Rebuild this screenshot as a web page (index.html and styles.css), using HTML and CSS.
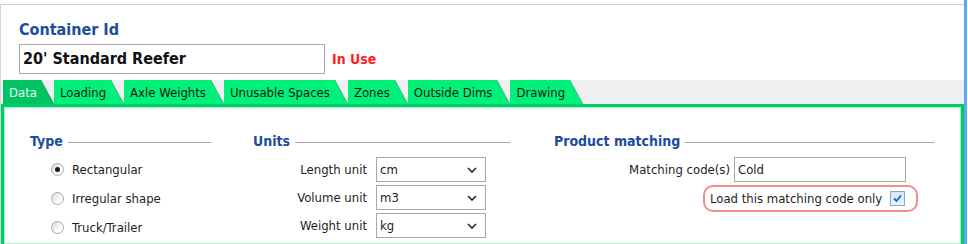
FILE: index.html
```html
<!DOCTYPE html>
<html lang="en">
<head>
  <meta charset="UTF-8" />
  <title>Container</title>
  <link rel="stylesheet" href="styles.css">
</head>
<body>

  <div class="window">
    <div class="frame">

      <!-- Container id -->
      <div class="header">
        <div class="id-label">Container Id</div>
        <div class="id-row">
          <div class="id-box">20' Standard Reefer</div>
          <span class="status">In Use</span>
        </div>
      </div>

      <!-- Tabs -->
      <div class="tabs">
        <div class="tab active">Data</div>
        <div class="tab">Loading</div>
        <div class="tab">Axle Weights</div>
        <div class="tab">Unusable Spaces</div>
        <div class="tab">Zones</div>
        <div class="tab">Outside Dims</div>
        <div class="tab">Drawing</div>
      </div>

      <!-- Data panel -->
      <div class="panel">

        <div class="group group-type">
          <div class="group-title">Type</div>
          <div class="radio-list">
            <div class="radio-row"><span class="radio checked"></span>Rectangular</div>
            <div class="radio-row"><span class="radio"></span>Irregular shape</div>
            <div class="radio-row"><span class="radio"></span>Truck/Trailer</div>
          </div>
        </div>

        <div class="group group-units">
          <div class="group-title">Units</div>
          <div class="field-list">
            <div class="field-row">
              <span class="field-label">Length unit</span>
              <div class="select">cm
                <svg class="chevron" width="10" height="6" viewBox="0 0 10 6"><polyline points="1,1 5,5 9,1" /></svg>
              </div>
            </div>
            <div class="field-row">
              <span class="field-label">Volume unit</span>
              <div class="select">m3
                <svg class="chevron" width="10" height="6" viewBox="0 0 10 6"><polyline points="1,1 5,5 9,1" /></svg>
              </div>
            </div>
            <div class="field-row">
              <span class="field-label">Weight unit</span>
              <div class="select">kg
                <svg class="chevron" width="10" height="6" viewBox="0 0 10 6"><polyline points="1,1 5,5 9,1" /></svg>
              </div>
            </div>
          </div>
        </div>

        <div class="group group-product">
          <div class="group-title">Product matching</div>
          <div class="field-list">
            <div class="field-row">
              <span class="field-label match-label">Matching code(s)</span>
              <div class="text-input">Cold</div>
            </div>
            <div class="highlight">
              Load this matching code only
              <span class="checkbox">
                <svg width="11" height="11" viewBox="0 0 11 11"><polyline points="2,5.5 4.5,8 9,2.5" /></svg>
              </span>
            </div>
          </div>
        </div>

      </div>
    </div>
  </div>

</body>
</html>
```

FILE: styles.css
```css
/* Global */
body {
  margin: 0;
  background-color: #fff;
  font-family: "DejaVu Sans Condensed", "DejaVu Sans", sans-serif;
  font-stretch: semi-condensed;
  font-size: 13px;
  color: #1e1e1e;
}

/* Window frame */
.window {
  width: 964px;
  height: 240px;
  padding-top: 4px;
  border-right: 3px solid #5aa8f8;
}

.frame {
  height: 239px;
  border-top: 1px solid #cdcdcd;
  border-left: 1px solid #d6d6d6;
  display: flex;
  flex-direction: column;
}

/* Header */
.header {
  height: 75px;
  box-sizing: border-box;
  padding: 15px 0 0 18px;
}

.id-label {
  font-size: 16px;
  font-weight: bold;
  color: #1c4c9c;
  line-height: 19px;
  margin-bottom: 5px;
}

.id-row {
  display: flex;
  align-items: center;
}

.id-box {
  width: 306px;
  height: 30px;
  box-sizing: border-box;
  border: 1px solid #a9a9a9;
  padding-left: 3px;
  font-size: 16px;
  font-weight: bold;
  color: #111;
  line-height: 28px;
}

.status {
  margin-left: 7px;
  font-size: 14px;
  font-weight: bold;
  color: #ff1f1f;
}

/* Tabs */
.tabs {
  height: 24px;
  background-color: #f0f0f0;
  display: flex;
  padding-left: 2px;
}

.tab {
  height: 24px;
  box-sizing: border-box;
  padding: 2px 18px 0 6px;
  line-height: 22px;
  color: #0c1a10;
  background:
    linear-gradient(to top right, #00f07a calc(50% - 0.6px), #5fae86 50%, transparent calc(50% + 0.6px)) right / 13px 100% no-repeat,
    linear-gradient(#00f07a, #00f07a) left / calc(100% - 13px) 100% no-repeat;
}

.tab.active {
  padding-right: 17px;
  color: #e6fff0;
  background:
    linear-gradient(to top right, #00c462 calc(50% - 0.6px), #4c9c74 50%, transparent calc(50% + 0.6px)) right / 13px 100% no-repeat,
    linear-gradient(#00c462, #00c462) left / calc(100% - 13px) 100% no-repeat;
}

/* Panel */
.panel {
  flex: 1;
  border: 3px solid #00cc66;
  border-bottom: none;
  box-shadow: inset 0 0 0 1px #a6f2cb;
  background-color: #fff;
  display: flex;
  padding: 26px 0 0 26px;
}

.group-title {
  display: flex;
  align-items: center;
  font-size: 14px;
  font-weight: bold;
  color: #1c4c9c;
  line-height: 17px;
}

.group-title::after {
  content: "";
  flex: 1;
  border-top: 1px solid #a3a3a3;
  margin: 1px 0 0 5px;
}

.group-type {
  width: 181px;
}

.group-units {
  width: 257px;
  margin-left: 42px;
}

.group-product {
  width: 380px;
  margin-left: 44px;
}

/* Radio buttons */
.radio-list {
  margin-top: 5px;
}

.radio-row {
  height: 29px;
  display: flex;
  align-items: center;
  padding-left: 21px;
}

.radio {
  width: 11px;
  height: 11px;
  border-radius: 50%;
  border: 1px solid #a8a8a8;
  background: linear-gradient(135deg, #d8d8d8, #fff 70%);
  margin-right: 8px;
  display: flex;
  align-items: center;
  justify-content: center;
}

.radio.checked::after {
  content: "";
  width: 5px;
  height: 5px;
  border-radius: 50%;
  background-color: #1a1a1a;
}

/* Fields */
.field-list {
  margin-top: 7px;
  display: flex;
  flex-direction: column;
  gap: 3px;
}

.field-row {
  display: flex;
  align-items: center;
}

.field-label {
  width: 114px;
  text-align: right;
  margin-right: 9px;
}

.select {
  width: 110px;
  height: 25px;
  box-sizing: border-box;
  border: 1px solid #a7a7a7;
  padding: 0 8px 0 3px;
  display: flex;
  align-items: center;
  justify-content: space-between;
}

.chevron polyline {
  fill: none;
  stroke: #222;
  stroke-width: 1.6;
}

.match-label {
  width: 176px;
  margin-right: 4px;
}

.text-input {
  width: 172px;
  height: 25px;
  box-sizing: border-box;
  border: 1px solid #a7a7a7;
  padding-left: 3px;
  line-height: 23px;
}

/* Highlighted checkbox row */
.highlight {
  margin-left: 149px;
  width: 215px;
  height: 27px;
  box-sizing: border-box;
  border: 2px solid #f28d8d;
  border-radius: 10px;
  padding: 0 11px 0 5px;
  display: flex;
  align-items: center;
  justify-content: space-between;
}

.checkbox {
  width: 13px;
  height: 13px;
  border: 1px solid #8aa6c8;
  background: linear-gradient(#d6e6f8, #eaf2fc);
  display: flex;
  align-items: center;
  justify-content: center;
}

.checkbox polyline {
  fill: none;
  stroke: #1463d6;
  stroke-width: 1.8;
}
```
